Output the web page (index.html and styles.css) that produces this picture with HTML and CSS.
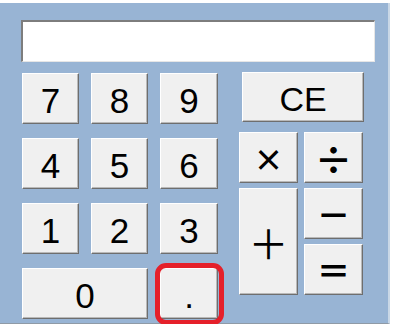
FILE: index.html
```html
<!DOCTYPE html>
<html lang="ja">
<head>
    <meta charset="UTF-8">
    <title>電卓</title>
    <link rel="stylesheet" href="styles.css">
</head>
<body>
    <div class="form">
        <div class="display"></div>
        <div class="keys">
            <div class="pad">
                <button class="key">7</button>
                <button class="key">8</button>
                <button class="key">9</button>
                <button class="key">4</button>
                <button class="key">5</button>
                <button class="key">6</button>
                <button class="key">1</button>
                <button class="key">2</button>
                <button class="key">3</button>
                <button class="key zero">0</button>
                <button class="key dot">.</button>
            </div>
            <div class="right">
                <button class="key ce">CE</button>
                <div class="ops">
                    <button class="key op times">×</button>
                    <button class="key op divide">÷</button>
                    <button class="key op plus">＋</button>
                    <button class="key op">－</button>
                    <button class="key op">＝</button>
                </div>
            </div>
        </div>
    </div>
</body>
</html>
```

FILE: styles.css
```css
body {
    margin: 0;
    background-color: #ffffff;
    font-family: "Liberation Sans", Arial, sans-serif;
}
.form {
    width: 390px;
    height: 321px;
    margin-top: 3px;
    padding: 17px 0 0 21px;
    box-sizing: border-box;
    background-color: #98b4d4;
    border-right: 2px solid #c9d7e6;
    border-bottom: 1px solid #8f9aa6;
}
.display {
    width: 354px;
    height: 42px;
    box-sizing: border-box;
    background-color: #ffffff;
    border-top: 2px solid #7d7d7d;
    border-left: 2px solid #7d7d7d;
    border-right: 1px solid #e6e6e6;
    border-bottom: 1px solid #e6e6e6;
}
.keys {
    display: flex;
    align-items: flex-start;
    gap: 21px;
    margin-top: 11px;
    margin-left: 1px;
}
.pad {
    display: grid;
    grid-template-columns: 57px 57px 58px;
    grid-auto-rows: 51px;
    column-gap: 12px;
    row-gap: 14px;
}
.right {
    display: flex;
    flex-direction: column;
    margin-top: -1px;
}
.ops {
    display: grid;
    grid-template-columns: 59px 59px;
    grid-template-rows: 51px 51px 51px;
    column-gap: 6px;
    row-gap: 5px;
    margin-top: 10px;
}
.key {
    display: flex;
    align-items: center;
    justify-content: center;
    padding: 0;
    margin: 0;
    background-color: #f0f0f0;
    border: 1px solid;
    border-color: #ffffff #6e6e6e #6e6e6e #ffffff;
    box-shadow: inset -1px -1px 0 #b9b9b9;
    color: #000000;
    font-family: "Liberation Sans", Arial, sans-serif;
    font-size: 35px;
    line-height: 1;
    padding-top: 4px;
}
.zero {
    grid-column: span 2;
}
.dot {
    position: relative;
}
.dot::after {
    content: "";
    position: absolute;
    top: -6px;
    left: -6px;
    right: -7px;
    bottom: -7px;
    border: 5px solid #e5202a;
    border-radius: 11px;
}
.ce {
    width: 122px;
    height: 50px;
    margin-left: 3px;
    font-size: 34px;
}
.op {
    font-family: "Noto Sans CJK JP", sans-serif;
    font-size: 34px;
    font-weight: bold;
    padding-top: 0;
}
.times {
    font-size: 30px;
}
.divide {
    font-size: 38px;
}
.plus {
    grid-row: span 2;
    font-size: 40px;
    font-weight: normal;
}
```
